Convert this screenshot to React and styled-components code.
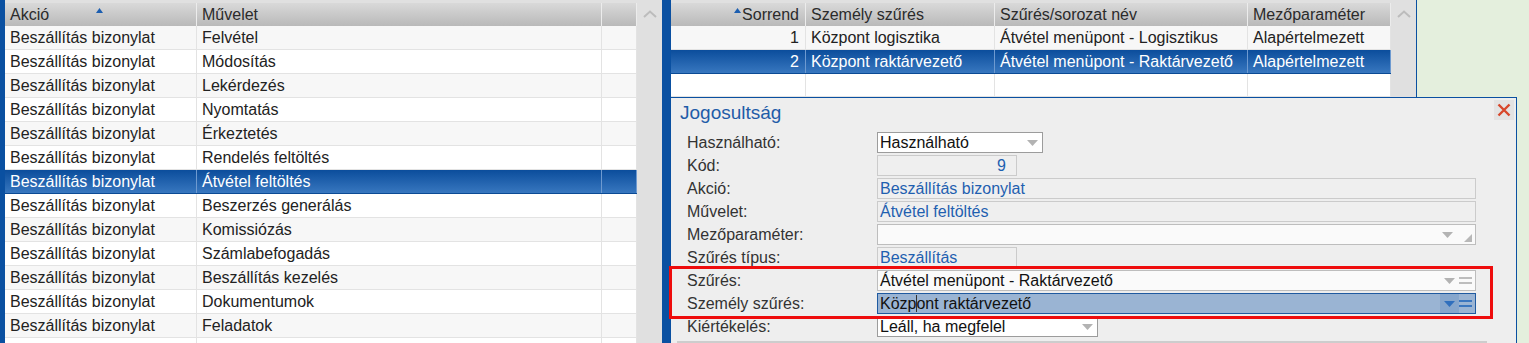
import React from 'react';
import styled, { createGlobalStyle } from 'styled-components';

const GlobalStyle = createGlobalStyle`
html, body {
    margin: 0;
    padding: 0;
}
body {
    width: 1529px;
    height: 343px;
    overflow: hidden;
    background: #e4efdd;
    font-family: "Liberation Sans", Arial, sans-serif;
    font-size: 16px;
    color: #222;
}
`

const Screen = styled.div`
display: flex;
width: 1529px;
height: 343px;
overflow: hidden;
`
const LeftPanel = styled.div`
display: flex;
flex-shrink: 0;
box-sizing: border-box;
width: 662px;
height: 343px;
border-left: 5px solid #0a50a1;
background: #e0e0e0;
overflow: hidden;
`
const Divider = styled.div`
flex-shrink: 0;
width: 9px;
height: 343px;
background: #0a50a1;
`
const RightPanel = styled.div`
display: flex;
flex-direction: column;
flex: 1;
background: #e4efdd;
`
const TopRow = styled.div`
display: flex;
height: 97px;
flex-shrink: 0;
`
const GridBox = styled.div`
display: flex;
box-sizing: border-box;
width: 746px;
height: 97px;
background: #e0e0e0;
border-right: 1px solid #0a50a1;
overflow: hidden;
`
const Table = styled.div`
width: ${({ $w }) => $w}px;
flex-shrink: 0;
padding-top: 3px;
overflow: hidden;
`
const HeaderRow = styled.div`
display: grid;
grid-template-columns: ${({ $cols }) => $cols};
height: 23px;
background: linear-gradient(#d9d9d9, #b9b9b9);
color: #2b2b2b;
`
const HeadCell = styled.div`
display: flex;
align-items: center;
justify-content: ${({ $right }) => $right ? 'flex-end' : 'flex-start'};
gap: 1px;
padding: 0 6px 0 5px;
border-right: 1px solid #ececec;
white-space: nowrap;
overflow: hidden;
`
const SortMark = styled.svg`
margin-left: ${({ $offset }) => $offset || 0}px;
margin-bottom: 9px;
`
const Row = styled.div`
display: grid;
grid-template-columns: ${({ $cols }) => $cols};
box-sizing: border-box;
height: ${({ $h }) => $h || 24}px;
border-bottom: 1px solid ${({ $sel }) => $sel ? '#0b4a94' : '#e3e3e3'};
background: ${({ $sel, $alt }) => $sel ? 'linear-gradient(#0b4d9c, #3877bf)' : $alt ? '#f7f7f7' : '#ffffff'};
color: ${({ $sel }) => $sel ? '#ffffff' : '#222'};
`
const Cell = styled.div`
display: flex;
align-items: center;
justify-content: ${({ $right }) => $right ? 'flex-end' : 'flex-start'};
padding: 0 6px 0 5px;
border-right: 1px solid ${({ $sel }) => $sel ? '#6e9ad0' : '#e3e3e3'};
white-space: nowrap;
overflow: hidden;
`
const Scrollbar = styled.div`
flex-shrink: 0;
width: 25px;
display: flex;
justify-content: center;
padding-top: 10px;
box-sizing: border-box;
background: #e0e0e0;
`
const Green = styled.div`
flex: 1;
background: #e4efdd;
`
const BottomRow = styled.div`
display: flex;
flex: 1;
`
const Dialog = styled.div`
position: relative;
box-sizing: border-box;
width: 846px;
flex-shrink: 0;
background: #eeeeee;
border-top: 1px solid #0a50a1;
border-right: 1px solid #0a50a1;
`
const DialogHead = styled.div`
display: flex;
justify-content: space-between;
align-items: flex-start;
height: 34px;
padding: 0 2px 0 9px;
`
const Title = styled.div`
font-size: 19px;
line-height: 30px;
color: #1f5ca8;
`
const CloseBtn = styled.div`
display: flex;
align-items: center;
justify-content: center;
width: 20px;
height: 20px;
margin-top: 2px;
background: #e3e3e3;
`
const Form = styled.div`
display: grid;
grid-template-columns: 190px 1fr;
grid-auto-rows: 21px;
row-gap: 2px;
padding-left: 16px;
`
const Label = styled.div`
line-height: 21px;
color: #333;
white-space: nowrap;
`
const Field = styled.div`
display: flex;
align-items: center;
box-sizing: border-box;
width: ${({ $w }) => $w}px;
height: ${({ $h }) => $h || 21}px;
padding: 0 0 0 2px;
border: 1px solid ${({ $variant }) => ({ select: '#9c9c9c', active: '#1f5aa0', input: '#bdbdbd' }[$variant] || '#cbcbcb')};
background: ${({ $variant }) => ({ select: '#ffffff', active: '#9ab4d3', input: '#fafafa' }[$variant] || '#efefef')};
color: ${({ $variant }) => ($variant === 'plain' ? '#1f5fb0' : '#111')};
white-space: nowrap;
overflow: hidden;
`
const FieldText = styled.div`
flex: 1;
text-align: ${({ $right }) => $right ? 'right' : 'left'};
padding-right: ${({ $right }) => $right ? '10px' : '0'};
`
const FieldIcons = styled.div`
display: flex;
align-items: center;
align-self: stretch;
gap: ${({ $gap }) => $gap ?? 8}px;
padding-right: ${({ $pr }) => $pr ?? 4}px;
`
const ArrowZone = styled.div`
display: flex;
align-items: center;
align-self: stretch;
padding: 0 4px;
background: ${({ $active }) => $active ? '#86a6cc' : 'transparent'};
`
const Caret = styled.span`
display: inline-block;
width: 1px;
height: 17px;
margin: 0 -1px 0 0;
vertical-align: -3px;
background: #333;
`
const Annotation = styled.div`
position: absolute;
left: -2px;
top: 168px;
box-sizing: border-box;
width: 824px;
height: 53px;
border: 3px solid #ee0c0c;
pointer-events: none;
`
const FooterLine = styled.div`
width: 810px;
height: 3px;
margin: 4px 0 0 6px;
background: #cdcdcd;
`

const DownArrow = ({ color = '#b3b3b3' }) => (
    <svg width="11" height="6" viewBox="0 0 11 6"><polygon points="0,0 11,0 5.5,6" fill={color} /></svg>
)
const Equals = ({ color = '#bdbdbd' }) => (
    <svg width="13" height="8" viewBox="0 0 13 8"><rect x="0" y="0" width="13" height="2" fill={color} /><rect x="0" y="5" width="13" height="2" fill={color} /></svg>
)
const Grip = () => (
    <svg width="8" height="8" viewBox="0 0 8 8" style={{ marginTop: 6 }}><polygon points="8,0 8,8 0,8" fill="#b8b8b8" /></svg>
)
const ChevronUp = () => (
    <svg width="14" height="8" viewBox="0 0 14 8"><polyline points="1,7 7,1.5 13,7" fill="none" stroke="#bcbcbc" strokeWidth="2" /></svg>
)
const CloseX = () => (
    <svg width="14" height="14" viewBox="0 0 14 14"><path d="M1.5 1.5 L12.5 12.5 M12.5 1.5 L1.5 12.5" stroke="#d8472b" strokeWidth="2.4" /></svg>
)
const SortArrow = ({ offset }) => (
    <SortMark $offset={offset} width="7" height="5" viewBox="0 0 7 5"><polygon points="3.5,0 7,5 0,5" fill="#1c5eb0" /></SortMark>
)

const leftCols = '192px 405px 35px';
const rightCols = '135px 189px 253px 143px';

const actions = [
    'Felvétel', 'Módosítás', 'Lekérdezés', 'Nyomtatás', 'Érkeztetés', 'Rendelés feltöltés',
    'Átvétel feltöltés', 'Beszerzés generálás', 'Komissiózás', 'Számlabefogadás',
    'Beszállítás kezelés', 'Dokumentumok', 'Feladatok', '',
];

const filters = [
    { n: 1, person: 'Központ logisztika', name: 'Átvétel menüpont - Logisztikus', param: 'Alapértelmezett' },
    { n: 2, person: 'Központ raktárvezető', name: 'Átvétel menüpont - Raktárvezető', param: 'Alapértelmezett', sel: true },
    { n: '', person: '', name: '', param: '', h: 23 },
];

const LeftGrid = () => (
    <Table $w={632}>
        <HeaderRow $cols={leftCols}>
            <HeadCell>Akció<SortArrow offset={46} /></HeadCell>
            <HeadCell>Művelet</HeadCell>
            <HeadCell />
        </HeaderRow>
        {actions.map((a, i) => {
            const sel = i === 6;
            return (
                <Row key={i} $cols={leftCols} $sel={sel} $alt={i % 2 === 0}>
                    <Cell $sel={sel}>{a ? 'Beszállítás bizonylat' : ''}</Cell>
                    <Cell $sel={sel}>{a}</Cell>
                    <Cell $sel={sel} />
                </Row>
            );
        })}
    </Table>
);

const RightGrid = () => (
    <Table $w={720}>
        <HeaderRow $cols={rightCols}>
            <HeadCell $right><SortArrow />Sorrend</HeadCell>
            <HeadCell>Személy szűrés</HeadCell>
            <HeadCell>Szűrés/sorozat név</HeadCell>
            <HeadCell>Mezőparaméter</HeadCell>
        </HeaderRow>
        {filters.map((f, i) => (
            <Row key={i} $cols={rightCols} $sel={f.sel} $alt={i === 0} $h={f.h}>
                <Cell $sel={f.sel} $right>{f.n}</Cell>
                <Cell $sel={f.sel}>{f.person}</Cell>
                <Cell $sel={f.sel}>{f.name}</Cell>
                <Cell $sel={f.sel}>{f.param}</Cell>
            </Row>
        ))}
    </Table>
);

const RightsDialog = () => (
    <Dialog>
        <DialogHead>
            <Title>Jogosultság</Title>
            <CloseBtn><CloseX /></CloseBtn>
        </DialogHead>
        <Form>
            <Label>Használható:</Label>
            <Field $w={166} $variant="select">
                <FieldText>Használható</FieldText>
                <FieldIcons $pr={4}><DownArrow /></FieldIcons>
            </Field>

            <Label>Kód:</Label>
            <Field $w={140} $variant="plain"><FieldText $right>9</FieldText></Field>

            <Label>Akció:</Label>
            <Field $w={599} $variant="plain"><FieldText>Beszállítás bizonylat</FieldText></Field>

            <Label>Művelet:</Label>
            <Field $w={599} $variant="plain"><FieldText>Átvétel feltöltés</FieldText></Field>

            <Label>Mezőparaméter:</Label>
            <Field $w={599} $variant="input">
                <FieldText />
                <FieldIcons $gap={11} $pr={3}><DownArrow /><Grip /></FieldIcons>
            </Field>

            <Label>Szűrés típus:</Label>
            <Field $w={140} $variant="plain"><FieldText>Beszállítás</FieldText></Field>

            <Label>Szűrés:</Label>
            <Field $w={599} $variant="input">
                <FieldText>Átvétel menüpont - Raktárvezető</FieldText>
                <FieldIcons $gap={0} $pr={3}>
                    <ArrowZone><DownArrow color="#b3b3b3" /></ArrowZone>
                    <Equals />
                </FieldIcons>
            </Field>

            <Label>Személy szűrés:</Label>
            <Field $w={599} $variant="active">
                <FieldText>Közp<Caret />ont raktárvezető</FieldText>
                <FieldIcons $gap={0} $pr={3}>
                    <ArrowZone $active><DownArrow color="#2f6fbd" /></ArrowZone>
                    <Equals color="#3a76bf" />
                </FieldIcons>
            </Field>

            <Label>Kiértékelés:</Label>
            <Field $w={221} $variant="select">
                <FieldText>Leáll, ha megfelel</FieldText>
                <FieldIcons $pr={4}><DownArrow /></FieldIcons>
            </Field>
        </Form>
        <FooterLine />
        <Annotation />
    </Dialog>
);

const App = () => {
    return (
        <>
            <GlobalStyle />
            <Screen>
                <LeftPanel>
                    <LeftGrid />
                    <Scrollbar><ChevronUp /></Scrollbar>
                </LeftPanel>
                <Divider />
                <RightPanel>
                    <TopRow>
                        <GridBox>
                            <RightGrid />
                            <Scrollbar><ChevronUp /></Scrollbar>
                        </GridBox>
                        <Green />
                    </TopRow>
                    <BottomRow>
                        <RightsDialog />
                        <Green />
                    </BottomRow>
                </RightPanel>
            </Screen>
        </>
    );
}

export default App;
